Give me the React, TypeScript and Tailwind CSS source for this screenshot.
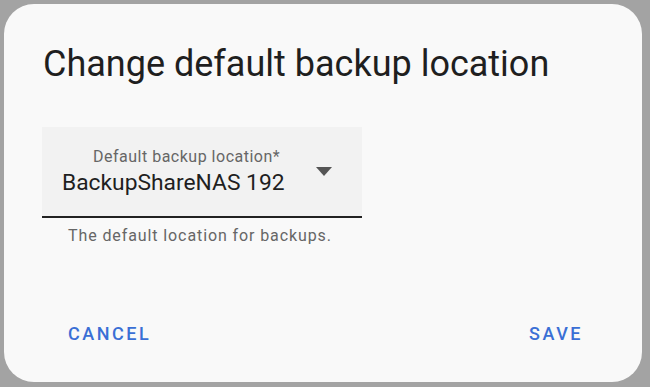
export default function App() {
  return (
    <div className="w-[650px] h-[387px] bg-[#a3a3a3] p-1 font-['Roboto',sans-serif]">
      <div className="w-[638px] h-[378px] bg-[#f9f9f9] rounded-[30px] flex flex-col">
        <h1 className="pl-[39px] pt-[38px] text-[36px] leading-[44px] text-[#1f1f1f]">Change default backup location</h1>
        <div className="pl-[38px] pt-[41px]">
          <div className="w-[320px] h-[91px] bg-[#f2f2f2] border-b-2 border-[#222] flex items-start">
            <div className="flex-1 pl-5 pt-5">
              <div className="pl-[31px] text-[16px] leading-[20px] tracking-[0.5px] text-[#666]">Default backup location*</div>
              <div className="mt-[2px] text-[22.8px] leading-[28px] text-[#1f1f1f]">BackupShareNAS 192</div>
            </div>
            <svg width="16" height="9" viewBox="0 0 16 9" className="mr-[30px] mt-[40px]">
              <path d="M0 0h16L8 9z" fill="#555" />
            </svg>
          </div>
          <div className="pl-[26px] pt-[8px] text-[16px] leading-[20px] tracking-[0.9px] text-[#666]">The default location for backups.</div>
        </div>
        <div className="flex justify-between pl-[64px] pr-[59px] pt-[76px]">
          <button className="text-[18px] leading-[24px] font-medium tracking-[2.5px] text-[#3a6fd5]">CANCEL</button>
          <button className="text-[18px] leading-[24px] font-medium tracking-[2.5px] text-[#3a6fd5]">SAVE</button>
        </div>
      </div>
    </div>
  );
}
